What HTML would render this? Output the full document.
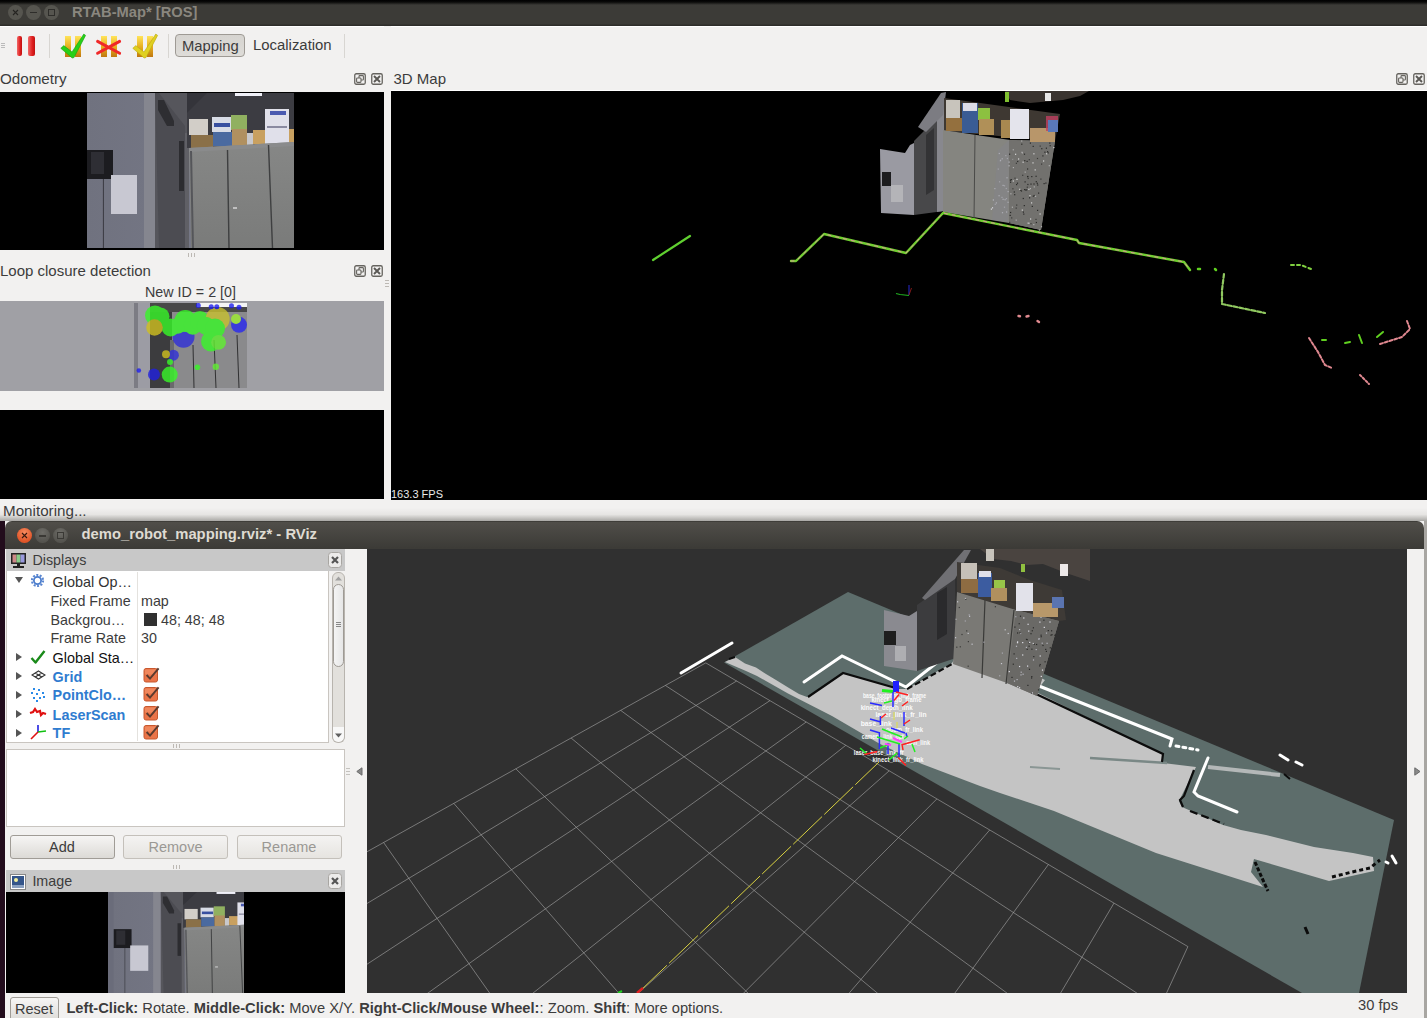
<!DOCTYPE html>
<html><head><meta charset="utf-8">
<style>
*{margin:0;padding:0;box-sizing:border-box}
html,body{width:1427px;height:1018px;overflow:hidden;background:#220c1c;font-family:"Liberation Sans",sans-serif;font-size:15px;color:#3c3c3c}
.a{position:absolute}
.t{position:absolute;white-space:nowrap;line-height:1}
.dk{position:absolute;width:11px;height:11px;border:1.5px solid #6a6864;border-radius:2px}
.cb{position:absolute;left:144px;width:14px;height:14px;border-radius:2px;background:linear-gradient(#f08a5e,#e06a3c);border:1px solid #c25a30}
.arr{position:absolute;left:16px;width:0;height:0;border-top:4px solid transparent;border-bottom:4px solid transparent;border-left:6px solid #555}
.btn{position:absolute;height:24px;border:1px solid #a09c96;border-radius:3px;background:linear-gradient(#f6f5f4,#dcdad6);text-align:center;line-height:22px;font-size:14.5px}
</style></head><body>
<!-- ============ RTAB-Map window ============ -->
<div class="a" style="left:0;top:0;width:1427px;height:26px;background:linear-gradient(#000 0,#0a0a09 2px,#3c3b37 5px,#3c3b37 24px,#2e2d2a 25px)"></div>
<div class="a" style="left:8px;top:5px;width:15px;height:15px;border-radius:50%;background:#56554f"></div>
<div class="a" style="left:26px;top:5px;width:15px;height:15px;border-radius:50%;background:#56554f"></div>
<div class="a" style="left:44px;top:5px;width:15px;height:15px;border-radius:50%;background:#56554f"></div>
<svg class="a" style="left:12px;top:9px" width="7" height="7"><path d="M1 1 L6 6 M6 1 L1 6" stroke="#262522" stroke-width="1.1"/></svg>
<div class="a" style="left:30px;top:12px;width:7px;height:1px;background:#2e2d2a"></div>
<div class="a" style="left:48px;top:9px;width:7px;height:7px;border:1.5px solid #2e2d2a"></div>
<div class="t" style="left:72px;top:4.6px;font-size:14.7px;font-weight:bold;color:#8a877f">RTAB-Map* [ROS]</div>
<div class="a" style="left:0;top:26px;width:1427px;height:495px;background:#f2f1f0;border-top:1px solid #fff"></div>
<!-- toolbar -->
<div class="a" style="left:1px;top:43px;width:4px;height:1px;background:#bbb;box-shadow:0 2px 0 #bbb,0 4px 0 #bbb"></div>
<div class="a" style="left:17px;top:36px;width:5px;height:20px;border-radius:2px;background:linear-gradient(90deg,#f06a6a,#e02020 60%,#c01010)"></div>
<div class="a" style="left:28px;top:36px;width:7px;height:20px;border-radius:2px;background:linear-gradient(90deg,#f06a6a,#e02020 60%,#c01010)"></div>
<div class="a" style="left:49px;top:34px;width:1px;height:24px;background:#d8d6d2"></div>
<div class="a" style="left:168px;top:34px;width:1px;height:24px;background:#d8d6d2"></div>
<div class="a" style="left:344px;top:34px;width:1px;height:24px;background:#d8d6d2"></div>
<svg class="a" style="left:58px;top:32px" width="104" height="28" viewBox="0 0 104 28">
 <defs><linearGradient id="gy" x1="0" y1="0" x2="0" y2="1"><stop offset="0" stop-color="#ffe45a"/><stop offset="0.5" stop-color="#e8b020"/><stop offset="1" stop-color="#c07810"/></linearGradient></defs>
 <rect x="7" y="4" width="6" height="21" fill="url(#gy)"/><rect x="17" y="4" width="6" height="21" fill="url(#gy)"/>
 <polygon points="2.8,16.3 5.8,13.6 14,20 25.8,2 27.6,3.4 16,25.5 14.2,26" fill="#28d018" stroke="#18a010" stroke-width="0.6"/>
 <rect x="43" y="4" width="6" height="21" fill="url(#gy)"/><rect x="53" y="4" width="6" height="21" fill="url(#gy)"/>
 <path d="M39.6 9.4 L61.6 21.2 M39.6 21.2 L61.6 9.4" stroke="#f02828" stroke-width="3" stroke-linecap="round"/>
 <rect x="79" y="4" width="6" height="21" fill="url(#gy)"/><rect x="89" y="4" width="6" height="21" fill="url(#gy)"/>
 <polygon points="74.8,16.3 77.8,13.6 86,20 97.8,2 99.6,3.4 88,25.5 86.2,26" fill="#e0d020" stroke="#b8a810" stroke-width="0.6"/>
</svg>
<div class="a" style="left:175px;top:34px;width:70px;height:23px;border:1px solid #9e9a94;border-radius:4px;background:linear-gradient(#d6d4d0,#dedcd8)"></div>
<div class="t" style="left:182px;top:38.6px;font-size:14.8px">Mapping</div>
<div class="t" style="left:253px;top:38.2px;font-size:14.9px">Localization</div>
<!-- docks -->
<div class="t" style="left:0;top:71.3px;font-size:15.2px">Odometry</div>
<svg class="a" style="left:354px;top:73px" width="12" height="12" viewBox="0 0 12 12"><rect x="0.75" y="0.75" width="10.5" height="10.5" rx="1.5" fill="none" stroke="#66645f" stroke-width="1.3"/><rect x="5" y="2.6" width="4.4" height="4.4" rx="0.8" fill="none" stroke="#66645f" stroke-width="1.1"/><rect x="2.6" y="5" width="4.4" height="4.4" rx="0.8" fill="#f2f1f0" stroke="#66645f" stroke-width="1.1"/></svg><svg class="a" style="left:371px;top:73px" width="12" height="12" viewBox="0 0 12 12"><rect x="0.75" y="0.75" width="10.5" height="10.5" rx="1.5" fill="none" stroke="#66645f" stroke-width="1.3"/><path d="M3 3 L9 9 M9 3 L3 9" stroke="#5a5854" stroke-width="1.9"/></svg>
<div class="a" style="left:0;top:92px;width:384px;height:158px;background:#000"></div>
<div class="a" style="left:188px;top:253px;width:1px;height:4px;background:#bdb9b4;box-shadow:3px 0 0 #bdb9b4,6px 0 0 #bdb9b4"></div>
<div class="t" style="left:0;top:263.2px;font-size:15px">Loop closure detection</div>
<svg class="a" style="left:354px;top:265px" width="12" height="12" viewBox="0 0 12 12"><rect x="0.75" y="0.75" width="10.5" height="10.5" rx="1.5" fill="none" stroke="#66645f" stroke-width="1.3"/><rect x="5" y="2.6" width="4.4" height="4.4" rx="0.8" fill="none" stroke="#66645f" stroke-width="1.1"/><rect x="2.6" y="5" width="4.4" height="4.4" rx="0.8" fill="#f2f1f0" stroke="#66645f" stroke-width="1.1"/></svg><svg class="a" style="left:371px;top:265px" width="12" height="12" viewBox="0 0 12 12"><rect x="0.75" y="0.75" width="10.5" height="10.5" rx="1.5" fill="none" stroke="#66645f" stroke-width="1.3"/><path d="M3 3 L9 9 M9 3 L3 9" stroke="#5a5854" stroke-width="1.9"/></svg>
<div class="t" style="left:145px;top:284.9px;font-size:14.3px">New ID = 2 [0]</div>
<div class="a" style="left:0;top:301px;width:385px;height:90px;background:#a0a0a5"></div>
<div class="a" style="left:0;top:410px;width:384px;height:89px;background:#000"></div>
<div class="a" style="left:384px;top:26px;width:7px;height:474px;background:#f2f1f0"></div>
<div class="a" style="left:385px;top:280px;width:4px;height:1px;background:#bdb9b4;box-shadow:0 3px 0 #bdb9b4,0 6px 0 #bdb9b4"></div>
<div class="t" style="left:393.5px;top:71.3px;font-size:15px">3D Map</div>
<svg class="a" style="left:1396px;top:73px" width="12" height="12" viewBox="0 0 12 12"><rect x="0.75" y="0.75" width="10.5" height="10.5" rx="1.5" fill="none" stroke="#66645f" stroke-width="1.3"/><rect x="5" y="2.6" width="4.4" height="4.4" rx="0.8" fill="none" stroke="#66645f" stroke-width="1.1"/><rect x="2.6" y="5" width="4.4" height="4.4" rx="0.8" fill="#f2f1f0" stroke="#66645f" stroke-width="1.1"/></svg><svg class="a" style="left:1413px;top:73px" width="12" height="12" viewBox="0 0 12 12"><rect x="0.75" y="0.75" width="10.5" height="10.5" rx="1.5" fill="none" stroke="#66645f" stroke-width="1.3"/><path d="M3 3 L9 9 M9 3 L3 9" stroke="#5a5854" stroke-width="1.9"/></svg>
<div class="a" style="left:391px;top:90px;width:1036px;height:1px;background:#fff"></div>
<!--MAP3D-->
<svg class="a" style="left:391px;top:91px" width="1036" height="409" viewBox="391 91 1036 409">
<rect x="391" y="91" width="1036" height="409" fill="#000"/>
<!-- point cloud corner -->
<polygon points="1005,91 1089,91 1080,96 1063,100 1030,103 1010,100" fill="#3a3430"/>
<polygon points="880,149 905,153 910,145 914,143 914,215 881,213" fill="#9a9aa2"/>
<rect x="882" y="172" width="9" height="14" fill="#1c1c1e"/>
<rect x="891" y="185" width="12" height="17" fill="#b4b4b8"/>
<polygon points="914,141 938,117 944,98 944,211 914,215" fill="#48484a"/>
<polygon points="926,135 934,128 934,190 926,195" fill="#333335"/>
<polygon points="937,100 944,97 944,211 937,212" fill="#88888e"/>
<polygon points="918,127 941,93 946,92 943,115 926,132" fill="#7c7c82"/>
<polygon points="944,98 1060,114 1055,141 944,131" fill="#3e3832"/>
<polygon points="943,130 1010,140 1055,141 1041,230 1009,223 943,212" fill="#858580"/>
<polygon points="1009,140 1055,141 1041,230 1009,223" fill="#72716e"/>
<path d="M975 135 L974 220" stroke="#4a4a48" stroke-width="1"/>
<g><rect x="1023.9" y="153.6" width="1.2" height="1.2" fill="#2a2a28"/><rect x="1012.3" y="188.2" width="1.2" height="1.2" fill="#3a3a38"/><rect x="1035.8" y="221.9" width="1.2" height="1.2" fill="#2a2a28"/><rect x="1010.7" y="179.0" width="1.2" height="1.2" fill="#2a2a28"/><rect x="1020.1" y="189.6" width="1.2" height="1.2" fill="#2a2a28"/><rect x="1047.0" y="151.1" width="1.2" height="1.2" fill="#2a2a28"/><rect x="1038.0" y="192.5" width="1.2" height="1.2" fill="#2a2a28"/><rect x="1035.5" y="175.7" width="1.2" height="1.2" fill="#2a2a28"/><rect x="1011.1" y="217.3" width="1.2" height="1.2" fill="#3a3a38"/><rect x="1028.3" y="188.7" width="1.2" height="1.2" fill="#d8d8d8"/><rect x="1023.2" y="213.5" width="1.2" height="1.2" fill="#2a2a28"/><rect x="1013.7" y="191.4" width="1.2" height="1.2" fill="#2a2a28"/><rect x="1026.1" y="189.3" width="1.2" height="1.2" fill="#2a2a28"/><rect x="1035.0" y="195.7" width="1.2" height="1.2" fill="#b0b0b0"/><rect x="1040.3" y="178.5" width="1.2" height="1.2" fill="#3a3a38"/><rect x="1030.4" y="223.1" width="1.2" height="1.2" fill="#3a3a38"/><rect x="1022.8" y="211.5" width="1.2" height="1.2" fill="#2a2a28"/><rect x="1012.8" y="167.0" width="1.2" height="1.2" fill="#b0b0b0"/><rect x="1014.4" y="177.6" width="1.2" height="1.2" fill="#3a3a38"/><rect x="1016.0" y="184.0" width="1.2" height="1.2" fill="#2a2a28"/><rect x="1053.3" y="147.0" width="1.2" height="1.2" fill="#d8d8d8"/><rect x="1035.4" y="218.8" width="1.2" height="1.2" fill="#3a3a38"/><rect x="1024.6" y="171.5" width="1.2" height="1.2" fill="#b0b0b0"/><rect x="1035.7" y="181.1" width="1.2" height="1.2" fill="#2a2a28"/><rect x="1039.6" y="145.5" width="1.2" height="1.2" fill="#3a3a38"/><rect x="1038.8" y="229.4" width="1.2" height="1.2" fill="#b0b0b0"/><rect x="1022.1" y="174.7" width="1.2" height="1.2" fill="#3a3a38"/><rect x="1010.0" y="181.6" width="1.2" height="1.2" fill="#2a2a28"/><rect x="1037.1" y="184.4" width="1.2" height="1.2" fill="#2a2a28"/><rect x="1044.3" y="151.6" width="1.2" height="1.2" fill="#2a2a28"/><rect x="1027.3" y="222.5" width="1.2" height="1.2" fill="#b0b0b0"/><rect x="1012.7" y="180.4" width="1.2" height="1.2" fill="#d8d8d8"/><rect x="1021.8" y="152.3" width="1.2" height="1.2" fill="#b0b0b0"/><rect x="1048.7" y="165.1" width="1.2" height="1.2" fill="#b0b0b0"/><rect x="1026.5" y="160.8" width="1.2" height="1.2" fill="#2a2a28"/><rect x="1017.1" y="160.9" width="1.2" height="1.2" fill="#2a2a28"/><rect x="1009.6" y="214.8" width="1.2" height="1.2" fill="#2a2a28"/><rect x="1021.1" y="140.4" width="1.2" height="1.2" fill="#b0b0b0"/><rect x="1033.6" y="194.9" width="1.2" height="1.2" fill="#3a3a38"/><rect x="1032.7" y="195.6" width="1.2" height="1.2" fill="#2a2a28"/><rect x="1030.0" y="218.4" width="1.2" height="1.2" fill="#d8d8d8"/><rect x="1027.0" y="175.9" width="1.2" height="1.2" fill="#2a2a28"/><rect x="1031.2" y="176.0" width="1.2" height="1.2" fill="#2a2a28"/><rect x="1012.1" y="158.8" width="1.2" height="1.2" fill="#2a2a28"/><rect x="1014.1" y="194.1" width="1.2" height="1.2" fill="#2a2a28"/><rect x="1009.0" y="153.6" width="1.2" height="1.2" fill="#2a2a28"/><rect x="1012.2" y="158.7" width="1.2" height="1.2" fill="#b0b0b0"/><rect x="1015.8" y="162.7" width="1.2" height="1.2" fill="#3a3a38"/><rect x="1036.7" y="182.7" width="1.2" height="1.2" fill="#2a2a28"/><rect x="1030.4" y="183.5" width="1.2" height="1.2" fill="#2a2a28"/><rect x="1015.6" y="207.5" width="1.2" height="1.2" fill="#3a3a38"/><rect x="1031.0" y="202.3" width="1.2" height="1.2" fill="#d8d8d8"/><rect x="1033.3" y="153.2" width="1.2" height="1.2" fill="#d8d8d8"/><rect x="1022.7" y="197.9" width="1.2" height="1.2" fill="#2a2a28"/><rect x="1041.0" y="163.5" width="1.2" height="1.2" fill="#3a3a38"/><rect x="1019.2" y="188.7" width="1.2" height="1.2" fill="#d8d8d8"/><rect x="1024.2" y="160.1" width="1.2" height="1.2" fill="#2a2a28"/><rect x="1043.0" y="160.4" width="1.2" height="1.2" fill="#d8d8d8"/><rect x="1031.7" y="205.8" width="1.2" height="1.2" fill="#2a2a28"/><rect x="1045.3" y="182.5" width="1.2" height="1.2" fill="#2a2a28"/><rect x="1040.9" y="226.1" width="1.2" height="1.2" fill="#b0b0b0"/><rect x="1012.7" y="149.2" width="1.2" height="1.2" fill="#b0b0b0"/><rect x="1018.0" y="158.4" width="1.2" height="1.2" fill="#d8d8d8"/><rect x="1009.1" y="221.8" width="1.2" height="1.2" fill="#3a3a38"/><rect x="1045.8" y="147.6" width="1.2" height="1.2" fill="#2a2a28"/><rect x="1043.5" y="183.0" width="1.2" height="1.2" fill="#2a2a28"/><rect x="1029.0" y="197.2" width="1.2" height="1.2" fill="#2a2a28"/><rect x="1027.2" y="176.1" width="1.2" height="1.2" fill="#2a2a28"/><rect x="1042.3" y="155.3" width="1.2" height="1.2" fill="#2a2a28"/><rect x="1010.3" y="193.2" width="1.2" height="1.2" fill="#b0b0b0"/><rect x="1046.1" y="153.2" width="1.2" height="1.2" fill="#d8d8d8"/><rect x="1025.1" y="189.4" width="1.2" height="1.2" fill="#2a2a28"/><rect x="1010.0" y="211.9" width="1.2" height="1.2" fill="#2a2a28"/><rect x="1033.2" y="224.0" width="1.2" height="1.2" fill="#b0b0b0"/><rect x="1049.2" y="142.5" width="1.2" height="1.2" fill="#2a2a28"/><rect x="1022.5" y="161.6" width="1.2" height="1.2" fill="#d8d8d8"/><rect x="1024.0" y="189.0" width="1.2" height="1.2" fill="#2a2a28"/><rect x="1011.8" y="206.6" width="1.2" height="1.2" fill="#b0b0b0"/><rect x="1039.5" y="213.4" width="1.2" height="1.2" fill="#d8d8d8"/><rect x="1028.3" y="222.6" width="1.2" height="1.2" fill="#d8d8d8"/><rect x="1015.0" y="153.7" width="1.2" height="1.2" fill="#d8d8d8"/><rect x="1009.9" y="179.6" width="1.2" height="1.2" fill="#2a2a28"/><rect x="1037.0" y="209.8" width="1.2" height="1.2" fill="#2a2a28"/><rect x="1016.9" y="182.6" width="1.2" height="1.2" fill="#2a2a28"/><rect x="1034.6" y="169.3" width="1.2" height="1.2" fill="#d8d8d8"/><rect x="1033.4" y="183.4" width="1.2" height="1.2" fill="#2a2a28"/><rect x="1049.6" y="145.1" width="1.2" height="1.2" fill="#2a2a28"/><rect x="1021.7" y="209.5" width="1.2" height="1.2" fill="#d8d8d8"/><rect x="1029.8" y="142.5" width="1.2" height="1.2" fill="#2a2a28"/><rect x="1029.4" y="195.1" width="1.2" height="1.2" fill="#d8d8d8"/><rect x="1036.9" y="157.9" width="1.2" height="1.2" fill="#3a3a38"/><rect x="1029.8" y="188.0" width="1.2" height="1.2" fill="#b0b0b0"/><rect x="1032.4" y="162.3" width="1.2" height="1.2" fill="#d8d8d8"/><rect x="1020.9" y="190.4" width="1.2" height="1.2" fill="#2a2a28"/><rect x="1047.6" y="152.3" width="1.2" height="1.2" fill="#2a2a28"/><rect x="1027.0" y="168.4" width="1.2" height="1.2" fill="#2a2a28"/><rect x="1028.7" y="159.1" width="1.2" height="1.2" fill="#3a3a38"/><rect x="1016.1" y="204.5" width="1.2" height="1.2" fill="#3a3a38"/><rect x="1015.6" y="219.5" width="1.2" height="1.2" fill="#b0b0b0"/><rect x="1027.3" y="183.9" width="1.2" height="1.2" fill="#2a2a28"/><rect x="1016.4" y="178.8" width="1.2" height="1.2" fill="#d8d8d8"/><rect x="1027.6" y="177.9" width="1.2" height="1.2" fill="#3a3a38"/><rect x="1023.7" y="205.0" width="1.2" height="1.2" fill="#2a2a28"/><rect x="1024.5" y="181.3" width="1.2" height="1.2" fill="#2a2a28"/><rect x="1026.7" y="186.6" width="1.2" height="1.2" fill="#3a3a38"/><rect x="1032.6" y="145.8" width="1.2" height="1.2" fill="#2a2a28"/><rect x="1021.2" y="143.6" width="1.2" height="1.2" fill="#2a2a28"/><rect x="1021.4" y="151.7" width="1.2" height="1.2" fill="#b0b0b0"/><rect x="1033.7" y="186.3" width="1.2" height="1.2" fill="#b0b0b0"/><rect x="1041.2" y="148.1" width="1.2" height="1.2" fill="#2a2a28"/><rect x="1005.2" y="155.0" width="1.2" height="1.2" fill="#c0c0c8"/><rect x="1001.6" y="158.2" width="1.2" height="1.2" fill="#d8d8e0"/><rect x="1006.4" y="177.2" width="1.2" height="1.2" fill="#d8d8e0"/><rect x="1007.4" y="191.0" width="1.2" height="1.2" fill="#c0c0c8"/><rect x="1000.0" y="159.6" width="1.2" height="1.2" fill="#c0c0c8"/><rect x="1008.4" y="161.5" width="1.2" height="1.2" fill="#c0c0c8"/><rect x="995.8" y="202.3" width="1.2" height="1.2" fill="#d8d8e0"/><rect x="998.5" y="195.1" width="1.2" height="1.2" fill="#d8d8e0"/><rect x="1003.9" y="185.2" width="1.2" height="1.2" fill="#c0c0c8"/><rect x="999.8" y="160.1" width="1.2" height="1.2" fill="#d8d8e0"/><rect x="992.0" y="207.2" width="1.2" height="1.2" fill="#d8d8e0"/><rect x="1002.5" y="184.8" width="1.2" height="1.2" fill="#d8d8e0"/><rect x="1008.4" y="165.2" width="1.2" height="1.2" fill="#c0c0c8"/><rect x="1005.8" y="198.0" width="1.2" height="1.2" fill="#c0c0c8"/><rect x="997.7" y="168.5" width="1.2" height="1.2" fill="#c0c0c8"/><rect x="1001.9" y="212.1" width="1.2" height="1.2" fill="#d8d8e0"/><rect x="1006.0" y="211.4" width="1.2" height="1.2" fill="#d8d8e0"/><rect x="1001.4" y="196.8" width="1.2" height="1.2" fill="#c0c0c8"/><rect x="998.7" y="152.9" width="1.2" height="1.2" fill="#d8d8e0"/><rect x="1006.8" y="157.9" width="1.2" height="1.2" fill="#c0c0c8"/><rect x="999.0" y="181.2" width="1.2" height="1.2" fill="#c0c0c8"/><rect x="994.7" y="203.7" width="1.2" height="1.2" fill="#c0c0c8"/><rect x="994.4" y="188.0" width="1.2" height="1.2" fill="#c0c0c8"/><rect x="1002.5" y="198.7" width="1.2" height="1.2" fill="#d8d8e0"/><rect x="1004.5" y="199.1" width="1.2" height="1.2" fill="#d8d8e0"/><rect x="992.8" y="199.4" width="1.2" height="1.2" fill="#c0c0c8"/><rect x="990.8" y="208.5" width="1.2" height="1.2" fill="#d8d8e0"/><rect x="1003.9" y="206.6" width="1.2" height="1.2" fill="#c0c0c8"/><rect x="1007.3" y="201.7" width="1.2" height="1.2" fill="#c0c0c8"/><rect x="1005.7" y="187.9" width="1.2" height="1.2" fill="#c0c0c8"/></g>
<polygon points="998,150 1009,140 1008,222 992,220" fill="#84848a" opacity="0.5"/>
<rect x="946" y="100" width="14" height="20" fill="#c8c4bc"/>
<rect x="946" y="118" width="17" height="13" fill="#94703e"/>
<rect x="962" y="103" width="16" height="30" fill="#3a5c94"/>
<rect x="963" y="103" width="14" height="8" fill="#dcdce6"/>
<rect x="978" y="108" width="12" height="12" fill="#8cc040"/>
<rect x="979" y="119" width="15" height="16" fill="#b09058"/>
<rect x="1001" y="120" width="12" height="18" fill="#a88850"/>
<rect x="1010" y="109" width="19" height="30" fill="#e4e4ec"/>
<rect x="1030" y="128" width="25" height="14" fill="#b8966a"/>
<rect x="1046" y="116" width="12" height="15" fill="#c04060" opacity="0.8"/>
<rect x="1048" y="120" width="10" height="12" fill="#5a78b8"/>
<rect x="1005" y="92" width="4" height="10" fill="#80c030"/>
<rect x="1045" y="93" width="6" height="8" fill="#e8e8e8"/>
<!-- laser scans -->
<g fill="none" stroke-linecap="round" stroke-linejoin="round">
<path d="M653 260 L690 236" stroke="#60d030" stroke-width="2.2"/>
<path d="M791 261 L796 261 L824 234 L906 253 L943 213 L1077 240 L1079 243 L1184 262 L1190 270" stroke="#70d030" stroke-width="2.4"/>
<path d="M791 261 L796 261 L824 234 L906 253 L943 213 L1077 240 L1079 243 L1184 262 L1190 270" stroke="#e890a0" stroke-width="0.9" stroke-dasharray="3 5"/>
<path d="M1224 274 L1222 290 L1222 304 L1265 313" stroke="#90c860" stroke-width="2.2" stroke-dasharray="4 2"/>
<path d="M1291 265 L1301 265 L1311 269" stroke="#80d040" stroke-width="2" stroke-dasharray="3 3"/>
<path d="M1309 338 L1318 352 L1325 365 L1332 368" stroke="#e08890" stroke-width="2" stroke-dasharray="3 2"/>
<path d="M1360 375 L1369 384" stroke="#e08890" stroke-width="2" stroke-dasharray="2 2"/>
<path d="M1380 344 L1402 337 L1410 329 L1407 321" stroke="#e08890" stroke-width="2" stroke-dasharray="3 2"/>
<path d="M1359 335 L1362 343 M1377 337 L1383 332 M1322 340 L1326 340 M1345 343 L1350 342" stroke="#60d020" stroke-width="2"/>
<path d="M1198 269 L1200 269 M1215 269 L1216 270" stroke="#60d020" stroke-width="2.5"/>
<path d="M1018.5 316 L1020 316.3 M1026.5 316.5 L1028.5 316 M1037.5 321 L1039 322" stroke="#e08a90" stroke-width="2.4"/>
</g>
<path d="M896 293.5 L900 294.5 L909 295.5" stroke="#20b020" stroke-width="1.1" fill="none"/><path d="M909 285 L909 295" stroke="#2020a0" stroke-width="1.3"/><path d="M909 295 L911.5 288" stroke="#a02020" stroke-width="0.8"/>
<text x="391" y="498" font-family="Liberation Sans" font-size="11" fill="#e8e8e8">163.3 FPS</text>
</svg>
<!--/MAP3D-->
<div class="a" style="left:0;top:508px;width:1427px;height:13px;background:linear-gradient(#f2f1f0,#e6e5e3 50%,#a9a8a5)"></div>
<div class="t" style="left:3px;top:502.8px;font-size:15.2px">Monitoring...</div>
<!-- ============ RViz window ============ -->
<div class="a" style="left:5px;top:521px;width:1419px;height:497px;background:#f2f1f0"></div>
<div class="a" style="left:1424px;top:521px;width:3px;height:497px;background:#a8a6a2"></div>
<div class="a" style="left:5px;top:521px;width:1419px;height:28px;background:linear-gradient(#2e2d29 0,#504e49 1px,#3c3b37 27px);border-radius:7px 7px 0 0"></div>
<div class="a" style="left:17px;top:528px;width:15px;height:15px;border-radius:50%;background:radial-gradient(circle at 50% 30%,#f88a5e,#e05528 70%)"></div>
<div class="a" style="left:35px;top:528px;width:15px;height:15px;border-radius:50%;background:radial-gradient(circle at 50% 30%,#6e6d68,#55544f 70%)"></div>
<div class="a" style="left:53px;top:528px;width:15px;height:15px;border-radius:50%;background:radial-gradient(circle at 50% 30%,#6e6d68,#55544f 70%)"></div>
<svg class="a" style="left:21px;top:532px" width="7" height="7"><path d="M1 1 L6 6 M6 1 L1 6" stroke="#3a1a10" stroke-width="1.1"/></svg>
<div class="a" style="left:39px;top:535px;width:7px;height:1.5px;background:#3a3935"></div>
<div class="a" style="left:57px;top:532px;width:7px;height:7px;border:1.5px solid #3a3935"></div>
<div class="t" style="left:81.5px;top:527px;font-size:14.8px;font-weight:bold;color:#dfdbd2">demo_robot_mapping.rviz* - RViz</div>
<!-- displays panel -->
<div class="a" style="left:6px;top:549px;width:339px;height:22px;background:#c8c8c8"></div>
<svg class="a" style="left:10px;top:552px" width="17" height="17" viewBox="0 0 17 17"><rect x="1" y="1" width="15" height="11" fill="#222"/><rect x="2.5" y="2.5" width="4" height="8" fill="#c88"/><rect x="6.5" y="2.5" width="4" height="8" fill="#8c8"/><rect x="10.5" y="2.5" width="4" height="8" fill="#99d"/><rect x="7" y="12" width="3" height="2" fill="#222"/><rect x="3" y="14" width="11" height="2" fill="#222"/></svg>
<div class="t" style="left:32.4px;top:553px;font-size:14.3px">Displays</div>
<svg class="a" style="left:328px;top:552px" width="14" height="16" viewBox="0 0 14 16"><rect x="0.5" y="0.5" width="13" height="15" rx="3" fill="#ecebea" stroke="#a8a6a2"/><path d="M4 5 L10 11 M10 5 L4 11" stroke="#555" stroke-width="2.2"/></svg>
<div class="a" style="left:6px;top:571px;width:323px;height:172px;background:#fff;border-left:1px solid #c9c5c0;border-bottom:1px solid #c9c5c0;border-right:1px solid #c9c5c0"></div>
<div class="a" style="left:137px;top:572px;width:1px;height:169px;background:#e4e2de"></div>
<div class="a" style="left:332px;top:572px;width:13px;height:170px;border:1px solid #b8b4ae;border-radius:6px;background:#e2e0dc"></div>
<div class="a" style="left:333px;top:584px;width:11px;height:83px;border:1px solid #9e9a94;border-radius:6px;background:linear-gradient(90deg,#f4f4f4,#e6e6e6)"></div>
<div class="a" style="left:332px;top:727px;width:13px;height:16px;border:1px solid #b8b4ae;border-top:none;border-radius:0 0 6px 6px;background:#f8f8f8"></div><svg class="a" style="left:334px;top:733px" width="9" height="5"><path d="M1 0.5 L8 0.5 L4.5 4.5Z" fill="#606060"/></svg><svg class="a" style="left:334px;top:576px" width="9" height="5"><path d="M1 4.5 L8 4.5 L4.5 0.5Z" fill="#a0a0a0"/></svg><div class="a" style="left:336px;top:622px;width:5px;height:1px;background:#888;box-shadow:0 2px 0 #888,0 4px 0 #888"></div>
<div class="arr" style="left:15px;top:577px;border-left:4px solid transparent;border-right:4px solid transparent;border-top:6px solid #555;border-bottom:0"></div>
<svg class="a" style="left:30px;top:573px" width="15" height="15" viewBox="0 0 15 15"><circle cx="7.5" cy="7.5" r="5.6" fill="none" stroke="#5a86d0" stroke-width="2" stroke-dasharray="2 1.5"/><circle cx="7.5" cy="7.5" r="3.6" fill="none" stroke="#4a7ccc" stroke-width="1.8"/></svg>
<div class="t" style="left:52.6px;top:574.8px;font-size:14.4px;color:#333">Global Op…</div>
<div class="t" style="left:50.4px;top:593.5px;font-size:14.3px;color:#3c3c3c">Fixed Frame</div>
<div class="t" style="left:141px;top:593.5px;font-size:14.3px">map</div>
<div class="t" style="left:50.4px;top:612.8px;font-size:14.3px">Backgrou…</div>
<div class="a" style="left:144px;top:613px;width:13px;height:13px;background:#303030"></div>
<div class="t" style="left:161px;top:612.8px;font-size:14.3px">48; 48; 48</div>
<div class="t" style="left:50.4px;top:631.3px;font-size:14.3px">Frame Rate</div>
<div class="t" style="left:141px;top:631.3px;font-size:14.3px">30</div>
<div class="arr" style="top:653px"></div>
<svg class="a" style="left:30px;top:650px" width="16" height="14" viewBox="0 0 16 14"><path d="M1.5 8 L5.5 12.5 L14.5 1" fill="none" stroke="#1a8a1a" stroke-width="2.4" stroke-linejoin="round"/></svg>
<div class="t" style="left:52.6px;top:650.5px;font-size:14.4px;color:#111">Global Sta…</div>
<div class="arr" style="top:672px"></div>
<svg class="a" style="left:31px;top:670px" width="15" height="10" viewBox="0 0 15 10"><path d="M7.5 1 L14 5 L7.5 9 L1 5 Z M4.2 3 L10.8 7 M10.8 3 L4.2 7" fill="none" stroke="#333" stroke-width="1.1"/></svg>
<div class="t" style="left:52.6px;top:669.5px;font-size:14.4px;font-weight:bold;color:#2f7cd0">Grid</div>
<svg class="a" style="left:143px;top:667px" width="17" height="16" viewBox="0 0 17 16"><rect x="1" y="1.5" width="13.5" height="13.5" rx="2" fill="#ea7448" stroke="#c8582e" stroke-width="1"/><rect x="2" y="2.5" width="11.5" height="5" rx="1" fill="#f4946a" opacity="0.6"/><path d="M3.6 8 L7 11.6 L15.6 1.4" fill="none" stroke="#5a3a2e" stroke-width="2"/></svg>
<div class="arr" style="top:691px"></div>
<svg class="a" style="left:30px;top:687px" width="16" height="15" viewBox="0 0 16 15"><g fill="#2a8ae8"><rect x="3" y="1" width="2" height="2"/><rect x="8" y="2" width="2" height="2"/><rect x="1" y="5" width="2" height="2"/><rect x="6" y="6" width="2" height="2"/><rect x="12" y="5" width="2" height="2"/><rect x="3" y="10" width="2" height="2"/><rect x="9" y="10" width="2" height="2"/><rect x="6" y="13" width="2" height="2"/><rect x="13" y="9" width="2" height="2"/></g></svg>
<div class="t" style="left:52.6px;top:688.4px;font-size:14.4px;font-weight:bold;color:#2f7cd0">PointClo…</div>
<svg class="a" style="left:143px;top:686px" width="17" height="16" viewBox="0 0 17 16"><rect x="1" y="1.5" width="13.5" height="13.5" rx="2" fill="#ea7448" stroke="#c8582e" stroke-width="1"/><rect x="2" y="2.5" width="11.5" height="5" rx="1" fill="#f4946a" opacity="0.6"/><path d="M3.6 8 L7 11.6 L15.6 1.4" fill="none" stroke="#5a3a2e" stroke-width="2"/></svg>
<div class="arr" style="top:710px"></div>
<svg class="a" style="left:29px;top:707px" width="18" height="12" viewBox="0 0 18 12"><path d="M1 6 L4 5 L6 2 L8 5 L11 4 L12 8 L14 6 L17 7" fill="none" stroke="#e01010" stroke-width="2.2"/></svg>
<div class="t" style="left:52.6px;top:707.5px;font-size:14.4px;font-weight:bold;color:#2f7cd0">LaserScan</div>
<svg class="a" style="left:143px;top:705px" width="17" height="16" viewBox="0 0 17 16"><rect x="1" y="1.5" width="13.5" height="13.5" rx="2" fill="#ea7448" stroke="#c8582e" stroke-width="1"/><rect x="2" y="2.5" width="11.5" height="5" rx="1" fill="#f4946a" opacity="0.6"/><path d="M3.6 8 L7 11.6 L15.6 1.4" fill="none" stroke="#5a3a2e" stroke-width="2"/></svg>
<div class="arr" style="top:729px"></div>
<svg class="a" style="left:29px;top:724px" width="18" height="16" viewBox="0 0 18 16"><path d="M9 8 L9 1" stroke="#2020e0" stroke-width="1.6"/><path d="M9 8 L17 7" stroke="#10c010" stroke-width="1.6"/><path d="M9 8 L2 15" stroke="#e01010" stroke-width="1.6"/></svg>
<div class="t" style="left:52.6px;top:726.4px;font-size:14.4px;font-weight:bold;color:#2f7cd0">TF</div>
<svg class="a" style="left:143px;top:724px" width="17" height="16" viewBox="0 0 17 16"><rect x="1" y="1.5" width="13.5" height="13.5" rx="2" fill="#ea7448" stroke="#c8582e" stroke-width="1"/><rect x="2" y="2.5" width="11.5" height="5" rx="1" fill="#f4946a" opacity="0.6"/><path d="M3.6 8 L7 11.6 L15.6 1.4" fill="none" stroke="#5a3a2e" stroke-width="2"/></svg>
<div class="a" style="left:173px;top:744px;width:1px;height:4px;background:#bdb9b4;box-shadow:3px 0 0 #bdb9b4,6px 0 0 #bdb9b4"></div>
<div class="a" style="left:6px;top:749px;width:339px;height:78px;background:#fff;border:1px solid #c9c5c0"></div>
<div class="btn" style="left:9.5px;top:834.5px;width:105px;color:#3c3c3c">Add</div>
<div class="btn" style="left:123px;top:834.5px;width:105px;color:#9a9894;border-color:#c4c0ba;background:linear-gradient(#f4f3f2,#e6e4e0)">Remove</div>
<div class="btn" style="left:236.5px;top:834.5px;width:105px;color:#9a9894;border-color:#c4c0ba;background:linear-gradient(#f4f3f2,#e6e4e0)">Rename</div>
<div class="a" style="left:173px;top:865px;width:1px;height:4px;background:#bdb9b4;box-shadow:3px 0 0 #bdb9b4,6px 0 0 #bdb9b4"></div>
<div class="a" style="left:6px;top:870px;width:339px;height:22px;background:#c8c8c8"></div>
<svg class="a" style="left:10px;top:874px" width="16" height="16" viewBox="0 0 16 16"><rect x="0.5" y="0.5" width="15" height="15" fill="#fff" stroke="#888"/><rect x="2" y="2" width="12" height="12" fill="#34558a"/><circle cx="6" cy="6" r="2" fill="#f4f0a0"/><path d="M2 11 L14 11 L14 14 L2 14Z" fill="#8aa0c0"/></svg>
<div class="t" style="left:32.4px;top:874px;font-size:14.3px">Image</div>
<svg class="a" style="left:328px;top:873px" width="14" height="16" viewBox="0 0 14 16"><rect x="0.5" y="0.5" width="13" height="15" rx="3" fill="#ecebea" stroke="#a8a6a2"/><path d="M4 5 L10 11 M10 5 L4 11" stroke="#555" stroke-width="2.2"/></svg>
<div class="a" style="left:6px;top:892px;width:339px;height:101px;background:#000"></div>
<!-- render view -->
<!--RVIZ-->
<svg class="a" style="left:367px;top:549px" width="1040" height="444" viewBox="367 549 1040 444">
<rect x="367" y="549" width="1040" height="444" fill="#303030"/>
<path d="M-20.7 1067.9L85.3 3346.9M104.9 997.8L438.0 2579.2M211.8 938.3L652.2 2112.9M303.7 887.0L796.1 1799.6M383.6 842.5L899.4 1574.7M453.8 803.4L977.2 1405.3M515.8 768.8L1037.9 1273.2M571.1 738.0L1086.5 1167.3M620.7 710.4L1126.4 1080.5M665.3 685.4L1159.7 1008.0M705.8 662.9L1187.9 946.6M-20.7 1067.9L705.8 662.9M-17.6 1135.0L736.6 681.0M-14.0 1213.5L770.0 700.6M-9.6 1306.6L806.2 722.0M-4.4 1418.8L845.8 745.3M2.0 1556.7L889.2 770.8M10.1 1730.1L936.9 798.9M20.5 1954.8L989.7 830.0M34.6 2257.6L1048.4 864.5M54.7 2687.7L1114.0 903.1M85.3 3346.9L1187.9 946.6" stroke="#a4a4a4" stroke-opacity="0.62" stroke-width="1" fill="none"/>
<path d="M638 993 L 879 762" stroke="#d8d040" stroke-width="1" stroke-dasharray="40 3"/>
<path d="M637 993 L 643 988" stroke="#e02020" stroke-width="2.5"/>
<path d="M618 993 L 622 991" stroke="#20d020" stroke-width="2"/>
<!-- map -->
<polygon points="724,662.5 848,592 1394,820 1359,993 1302,993" fill="#5d6d6b"/>
<polygon points="727,661 735,657 745,663.5 756,667.5 766,674 776,680 789,688 799,694 807,697 843,673 899,689 907,689 952,663 965,640 1045,680 1036,692 1120,734 1163,754 1163,763 1196,767 1179,801 1182,807 1223,825 1241,830 1266,835 1314,847 1353,853 1373,857 1374,871 1329,881 1254,859 1251,872 1263,887 1156,853 1054,811 1000,793 980,786 922,764 880,744 832,716 788,693.5 757,676 746,671 725,662" fill="#c4c4c4"/>
<path d="M1090 758 L1167 763" stroke="#7a8886" stroke-width="2.5"/>
<path d="M1030 767 L1060 769" stroke="#8a9694" stroke-width="2"/>
<path d="M1208 767 L1280 775" stroke="#b4b8b8" stroke-width="4"/>
<g stroke="#0c0c0c" stroke-width="2.2" fill="none">
<path d="M808 697 L843 673 L899 689"/><path d="M729 659 L735 657" stroke-width="2"/>
<path d="M907 689 L952 664" stroke-dasharray="6 3"/>
<path d="M1036 694 L1163 754 L1162 762"/>
<path d="M1194 770 L1184 796 L1180 800 L1183 807"/>
<path d="M1190 811 L1224 824" stroke-dasharray="8 4"/>
<path d="M1255 862 L1262 878 L1268 891" stroke-width="3" stroke-dasharray="4 2"/>
<path d="M1332 877 L1352 872 L1370 868 L1380 860" stroke-width="3" stroke-dasharray="4 3"/>
<path d="M1305 927 L1308 934" stroke-width="3"/>
<path d="M1284 774 L1290 779" stroke-width="2"/>
</g>
<g stroke="#fff" stroke-width="3" fill="none" stroke-linecap="round">
<path d="M681 673 L732 643"/>
<path d="M804 682 L842 656 L906 687 L953 650"/>
<path d="M1039 686 L1172 739 L1170 746"/>
<path d="M1176 746 L1198 750" stroke-dasharray="3 4"/>
<path d="M1208 758 L1194 792 L1198 796 L1237 812"/>
<path d="M1280 755 L1288 760 M1296 762 L1302 765"/>
<path d="M1392 856 L1396 863 M1386 862 L1388 863"/>
</g>
<!-- point cloud -->
<polygon points="964,549 1090,549 1090,581 1066,573 1043,564 1027,565 1011,561 993,559 980,549" fill="#4a4440"/>
<polygon points="884,610 909,616 917,611 917,671 884,666" fill="#8a8a90"/>
<rect x="884" y="631" width="12" height="14" fill="#1e1e1e"/>
<rect x="895" y="646" width="11" height="15" fill="#aeaeb2"/>
<polygon points="917,605 955,578 956,658 917,671" fill="#3c3c3e"/>
<polygon points="937,593 947,587 947,634 937,640" fill="#2a2a2c"/>
<polygon points="922,598 964,550 971,550 955,579 925,600" fill="#707074"/>
<polygon points="957,562 1000,568 1030,580 1062,590 1066,620 1059,621 1016,610 957,592" fill="#3e3a36"/>
<polygon points="957,592 1016,610 1059,621 1037,696 1007,683 953,664" fill="#7a7975"/>
<polygon points="1016,610 1059,621 1037,696 1007,683" fill="#6a6966"/>
<path d="M985 600 L982 678 M1014 610 L1006 684" stroke="#3a3a38" stroke-width="1.2"/>
<g><rect x="1026.6" y="648.8" width="1.2" height="1.2" fill="#2a2a28"/><rect x="1039.6" y="663.9" width="1.2" height="1.2" fill="#2a2a28"/><rect x="1033.2" y="656.0" width="1.2" height="1.2" fill="#2a2a28"/><rect x="1045.8" y="650.8" width="1.2" height="1.2" fill="#2a2a28"/><rect x="1051.0" y="630.2" width="1.2" height="1.2" fill="#2a2a28"/><rect x="1019.0" y="665.9" width="1.2" height="1.2" fill="#e0e0e8"/><rect x="1032.7" y="642.9" width="1.2" height="1.2" fill="#e0e0e8"/><rect x="1054.3" y="634.7" width="1.2" height="1.2" fill="#2a2a28"/><rect x="1039.1" y="665.3" width="1.2" height="1.2" fill="#2a2a28"/><rect x="1038.2" y="638.5" width="1.2" height="1.2" fill="#b8b8c0"/><rect x="1039.3" y="621.5" width="1.2" height="1.2" fill="#e0e0e8"/><rect x="1041.9" y="669.5" width="1.2" height="1.2" fill="#e0e0e8"/><rect x="1022.1" y="654.4" width="1.2" height="1.2" fill="#e0e0e8"/><rect x="1031.2" y="676.0" width="1.2" height="1.2" fill="#2a2a28"/><rect x="1023.2" y="617.4" width="1.2" height="1.2" fill="#e0e0e8"/><rect x="1030.4" y="633.1" width="1.2" height="1.2" fill="#2a2a28"/><rect x="1045.9" y="632.5" width="1.2" height="1.2" fill="#b8b8c0"/><rect x="1013.9" y="680.5" width="1.2" height="1.2" fill="#b8b8c0"/><rect x="1019.0" y="687.2" width="1.2" height="1.2" fill="#e0e0e8"/><rect x="1027.5" y="623.7" width="1.2" height="1.2" fill="#e0e0e8"/><rect x="1042.4" y="644.9" width="1.2" height="1.2" fill="#2a2a28"/><rect x="1028.6" y="642.3" width="1.2" height="1.2" fill="#2a2a28"/><rect x="1022.1" y="642.0" width="1.2" height="1.2" fill="#e0e0e8"/><rect x="1027.3" y="684.8" width="1.2" height="1.2" fill="#2a2a28"/><rect x="1025.8" y="646.8" width="1.2" height="1.2" fill="#b8b8c0"/><rect x="1051.4" y="634.1" width="1.2" height="1.2" fill="#2a2a28"/><rect x="1050.4" y="634.6" width="1.2" height="1.2" fill="#2a2a28"/><rect x="1020.0" y="632.9" width="1.2" height="1.2" fill="#b8b8c0"/><rect x="1016.9" y="642.1" width="1.2" height="1.2" fill="#e0e0e8"/><rect x="1045.1" y="648.8" width="1.2" height="1.2" fill="#2a2a28"/><rect x="1040.5" y="634.6" width="1.2" height="1.2" fill="#2a2a28"/><rect x="1015.9" y="645.7" width="1.2" height="1.2" fill="#b8b8c0"/><rect x="1022.5" y="673.6" width="1.2" height="1.2" fill="#b8b8c0"/><rect x="1028.1" y="630.5" width="1.2" height="1.2" fill="#e0e0e8"/><rect x="1036.0" y="643.9" width="1.2" height="1.2" fill="#2a2a28"/><rect x="1040.4" y="616.5" width="1.2" height="1.2" fill="#e0e0e8"/><rect x="1035.6" y="649.0" width="1.2" height="1.2" fill="#b8b8c0"/><rect x="1014.3" y="626.5" width="1.2" height="1.2" fill="#2a2a28"/><rect x="1016.1" y="657.8" width="1.2" height="1.2" fill="#b8b8c0"/><rect x="1019.4" y="632.2" width="1.2" height="1.2" fill="#2a2a28"/><rect x="1028.5" y="645.6" width="1.2" height="1.2" fill="#2a2a28"/><rect x="1026.6" y="639.1" width="1.2" height="1.2" fill="#2a2a28"/><rect x="1032.9" y="659.4" width="1.2" height="1.2" fill="#b8b8c0"/><rect x="1013.5" y="653.3" width="1.2" height="1.2" fill="#2a2a28"/><rect x="1027.0" y="665.5" width="1.2" height="1.2" fill="#e0e0e8"/><rect x="1008.7" y="671.0" width="1.2" height="1.2" fill="#e0e0e8"/><rect x="1031.3" y="648.6" width="1.2" height="1.2" fill="#2a2a28"/><rect x="1018.6" y="623.1" width="1.2" height="1.2" fill="#2a2a28"/><rect x="1040.7" y="675.8" width="1.2" height="1.2" fill="#e0e0e8"/><rect x="1011.4" y="676.8" width="1.2" height="1.2" fill="#2a2a28"/><rect x="1047.7" y="630.0" width="1.2" height="1.2" fill="#2a2a28"/><rect x="1040.6" y="636.1" width="1.2" height="1.2" fill="#2a2a28"/><rect x="1039.6" y="655.4" width="1.2" height="1.2" fill="#e0e0e8"/><rect x="1043.3" y="619.6" width="1.2" height="1.2" fill="#2a2a28"/><rect x="1017.0" y="632.4" width="1.2" height="1.2" fill="#2a2a28"/><rect x="1031.0" y="692.5" width="1.2" height="1.2" fill="#2a2a28"/><rect x="1031.7" y="630.2" width="1.2" height="1.2" fill="#2a2a28"/><rect x="1017.1" y="686.1" width="1.2" height="1.2" fill="#e0e0e8"/><rect x="1029.1" y="641.8" width="1.2" height="1.2" fill="#e0e0e8"/><rect x="1028.9" y="668.7" width="1.2" height="1.2" fill="#2a2a28"/><rect x="1032.8" y="627.2" width="1.2" height="1.2" fill="#2a2a28"/><rect x="1019.0" y="629.0" width="1.2" height="1.2" fill="#b8b8c0"/><rect x="1012.7" y="663.6" width="1.2" height="1.2" fill="#2a2a28"/><rect x="1037.9" y="689.3" width="1.2" height="1.2" fill="#2a2a28"/><rect x="1041.6" y="642.6" width="1.2" height="1.2" fill="#b8b8c0"/><rect x="1046.5" y="642.7" width="1.2" height="1.2" fill="#b8b8c0"/><rect x="1049.7" y="647.2" width="1.2" height="1.2" fill="#2a2a28"/><rect x="1043.7" y="626.8" width="1.2" height="1.2" fill="#e0e0e8"/><rect x="1017.0" y="641.3" width="1.2" height="1.2" fill="#e0e0e8"/><rect x="1020.4" y="674.3" width="1.2" height="1.2" fill="#b8b8c0"/><rect x="1025.9" y="638.8" width="1.2" height="1.2" fill="#2a2a28"/><rect x="1020.6" y="671.6" width="1.2" height="1.2" fill="#b8b8c0"/><rect x="1044.5" y="661.2" width="1.2" height="1.2" fill="#2a2a28"/><rect x="1031.7" y="692.3" width="1.2" height="1.2" fill="#e0e0e8"/><rect x="1049.4" y="621.4" width="1.2" height="1.2" fill="#e0e0e8"/><rect x="1016.5" y="679.0" width="1.2" height="1.2" fill="#b8b8c0"/><rect x="1038.6" y="638.2" width="1.2" height="1.2" fill="#b8b8c0"/><rect x="1031.0" y="677.4" width="1.2" height="1.2" fill="#2a2a28"/><rect x="1033.6" y="643.7" width="1.2" height="1.2" fill="#2a2a28"/><rect x="1019.9" y="615.6" width="1.2" height="1.2" fill="#2a2a28"/><rect x="983.3" y="641.6" width="1.2" height="1.2" fill="#a8a8b0"/><rect x="1015.2" y="616.1" width="1.2" height="1.2" fill="#a8a8b0"/><rect x="966.1" y="630.3" width="1.2" height="1.2" fill="#3a3a38"/><rect x="961.4" y="633.9" width="1.2" height="1.2" fill="#3a3a38"/><rect x="967.8" y="641.0" width="1.2" height="1.2" fill="#3a3a38"/><rect x="1000.9" y="663.0" width="1.2" height="1.2" fill="#c8c8d0"/><rect x="971.5" y="643.6" width="1.2" height="1.2" fill="#c8c8d0"/><rect x="969.0" y="615.7" width="1.2" height="1.2" fill="#c8c8d0"/><rect x="968.6" y="614.3" width="1.2" height="1.2" fill="#a8a8b0"/><rect x="964.9" y="597.9" width="1.2" height="1.2" fill="#c8c8d0"/><rect x="967.6" y="665.6" width="1.2" height="1.2" fill="#3a3a38"/><rect x="967.6" y="632.8" width="1.2" height="1.2" fill="#c8c8d0"/><rect x="955.5" y="618.7" width="1.2" height="1.2" fill="#a8a8b0"/><rect x="956.2" y="646.6" width="1.2" height="1.2" fill="#3a3a38"/><rect x="965.2" y="598.8" width="1.2" height="1.2" fill="#3a3a38"/><rect x="1007.6" y="632.9" width="1.2" height="1.2" fill="#c8c8d0"/><rect x="1001.8" y="652.5" width="1.2" height="1.2" fill="#a8a8b0"/><rect x="959.7" y="646.2" width="1.2" height="1.2" fill="#3a3a38"/><rect x="999.1" y="675.2" width="1.2" height="1.2" fill="#a8a8b0"/><rect x="1004.6" y="629.2" width="1.2" height="1.2" fill="#c8c8d0"/><rect x="964.7" y="620.4" width="1.2" height="1.2" fill="#a8a8b0"/><rect x="955.0" y="637.1" width="1.2" height="1.2" fill="#c8c8d0"/><rect x="957.0" y="601.2" width="1.2" height="1.2" fill="#c8c8d0"/><rect x="994.8" y="606.1" width="1.2" height="1.2" fill="#3a3a38"/><rect x="958.7" y="606.9" width="1.2" height="1.2" fill="#3a3a38"/></g>
<rect x="961" y="563" width="16" height="17" fill="#c6c0b8"/>
<rect x="961" y="579" width="17" height="14" fill="#8e6c42"/>
<rect x="978" y="573" width="14" height="24" fill="#3c5ca0"/>
<rect x="979" y="571" width="12" height="6" fill="#e0e0ea"/>
<rect x="994" y="580" width="11" height="11" fill="#98c448"/>
<rect x="991" y="588" width="16" height="13" fill="#b0905e"/>
<rect x="1016" y="583" width="17" height="28" fill="#e2e2ea"/>
<rect x="1033" y="603" width="25" height="14" fill="#b8986a"/>
<rect x="1052" y="597" width="12" height="11" fill="#5a74b0"/>
<rect x="986" y="549" width="8" height="12" fill="#c8c4bc"/>
<rect x="1060" y="564" width="8" height="12" fill="#ece8e8"/>
<rect x="1021" y="564" width="4" height="8" fill="#90c040"/>
<!-- TF cluster -->
<g font-family="Liberation Sans" font-weight="bold" fill="#ffffff" opacity="0.95"><text x="863" y="697.5" textLength="63" lengthAdjust="spacingAndGlyphs" font-size="6.5">base_footprint_link_frame</text><text x="871.5" y="701.8" textLength="50" lengthAdjust="spacingAndGlyphs" font-size="6.5">kinect_rgb_frame</text><text x="860.7" y="710" textLength="52" lengthAdjust="spacingAndGlyphs" font-size="6.5">kinect_depth_link</text><text x="875.5" y="716.6" textLength="51" lengthAdjust="spacingAndGlyphs" font-size="6.5">laser_link_fr_lin</text><text x="860.7" y="726.2" textLength="31" lengthAdjust="spacingAndGlyphs" font-size="6.5">base_link</text><text x="886" y="731.5" textLength="37" lengthAdjust="spacingAndGlyphs" font-size="6.5">odom_fr_link</text><text x="861.7" y="739" textLength="42" lengthAdjust="spacingAndGlyphs" font-size="6.5">camera_link_opt</text><text x="906" y="745" textLength="24" lengthAdjust="spacingAndGlyphs" font-size="6.5">cam_link</text><text x="853.8" y="755" textLength="50" lengthAdjust="spacingAndGlyphs" font-size="6.5">laser_base_link_fr</text><text x="872.5" y="761.5" textLength="51" lengthAdjust="spacingAndGlyphs" font-size="6.5">kinect_link_fr_link</text></g>
<g fill="none">
<path d="M896 681 L896 692" stroke="#2020ff" stroke-width="6"/>
<path d="M882 690.5 L893 691.5" stroke="#20f020" stroke-width="3"/>
<path d="M896 692 L908 695" stroke="#ff2020" stroke-width="1.6"/>
<g stroke-width="1.5">
<path d="M893 692 L893 707 M870 703 L882 705.5 M870 719 L880 721.7 M870 730 L880 733 M904 712 L904 726 M880.4 716 L880.4 725 M879.4 732 L879.4 749 M899 743 L899 757 M888 743 L888 754 M891 728 L905 733 M906 733 L907 737" stroke="#2a2aff"/>
<path d="M884 703 L892 701 M882 729 L902 737 M877 737 L900 744 M880 748 L890 744 M860 748 L867 754 M889 760 L897 753 M912 744 L915 752 M904 739 L908 736" stroke="#20f020"/>
<path d="M894 700.5 L899 694.6 M902 706 L908 701.5 M881 718 L886 714 M904 724 L910 720 M902 744.7 L919.7 739.8 M902 744 L903 750 M864.6 754.6 L877.4 751.6 M898 757.5 L906 765.4" stroke="#ff2020"/>
<path d="M893 738 L902 742 M885 744 L891 745" stroke="#ff40ff" stroke-width="2"/>
<path d="M894 712 L894 720 M897 722 L897 728" stroke="#e0e040" stroke-width="1"/>
</g></g>
</svg>

<!--/RVIZ-->
<svg class="a" style="left:356px;top:767px" width="7" height="9"><path d="M6 0.8 L6 8.2 L0.8 4.5 Z" fill="#8a8a8a" stroke="#6a6a6a" stroke-width="1"/></svg><div class="a" style="left:346px;top:768px;width:4px;height:1px;background:#c4c2be;box-shadow:0 3px 0 #c4c2be,0 6px 0 #c4c2be"></div>
<svg class="a" style="left:1414px;top:767px" width="7" height="9"><path d="M0.8 0.8 L0.8 8.2 L6 4.5 Z" fill="#8a8a8a" stroke="#6a6a6a" stroke-width="1"/></svg>
<!--PHOTOS-->
<svg width="0" height="0" style="position:absolute">
<defs>
<linearGradient id="wallg" x1="0" y1="0" x2="1" y2="0"><stop offset="0" stop-color="#70727f"/><stop offset="1" stop-color="#7a7c8c"/></linearGradient>
<linearGradient id="cabg" x1="0" y1="0" x2="0" y2="1"><stop offset="0" stop-color="#868786"/><stop offset="1" stop-color="#7a7b7a"/></linearGradient>
<symbol id="photo" viewBox="0 0 207 155" preserveAspectRatio="none">
<rect width="207" height="155" fill="url(#wallg)"/>
<rect x="57" y="0" width="11" height="155" fill="#85868f"/>
<polygon points="68,0 100,0 102,155 68,155" fill="#56565c"/>
<polygon points="68,0 72,0 98,33 100,155 72,155" fill="#4c4c52"/>
<polygon points="71,7 77,7 87,28 87,33 80,33 71,17" fill="#2e2e32"/>
<rect x="92" y="48" width="5" height="50" fill="#2c2c30"/>
<rect x="98" y="40" width="4" height="115" fill="#606066"/>
<rect x="100" y="0" width="107" height="55" fill="#3c3c42"/>
<polygon points="100,0 120,0 100,20" fill="#34343a"/>
<rect x="148" y="0" width="27" height="3" fill="#f0f0f8"/>
<rect x="102" y="26" width="19" height="16" fill="#d2cec8"/>
<rect x="104" y="42" width="22" height="13" fill="#8a7048"/>
<rect x="125" y="24" width="19" height="15" fill="#d8dce6"/>
<rect x="127" y="30" width="16" height="4" fill="#3850a0"/>
<rect x="126" y="39" width="19" height="14" fill="#4a6aa0"/>
<rect x="144" y="22" width="16" height="15" fill="#90b060"/>
<rect x="145" y="36" width="15" height="17" fill="#b09060"/>
<rect x="160" y="40" width="6" height="13" fill="#c8c8cc"/>
<rect x="166" y="37" width="13" height="14" fill="#c8a060"/>
<rect x="178" y="16" width="24" height="35" fill="#e0e0ea"/>
<rect x="183" y="18" width="16" height="4" fill="#4a5ab0"/>
<rect x="180" y="33" width="20" height="2" fill="#8a8aa0"/>
<rect x="202" y="36" width="5" height="15" fill="#c8a060"/>
<polygon points="102,55 207,49 207,155 104,155" fill="url(#cabg)"/>
<polygon points="102,55 207,49 207,53 102,59" fill="#8a8b8c"/>
<path d="M140.5 57 L142 155 M181.5 52 L185.5 155" stroke="#3e3f40" stroke-width="1.4"/>
<path d="M104 58 L106 155" stroke="#55565a" stroke-width="2"/>
<rect x="146" y="114" width="4" height="2" fill="#c0c0c0"/>
<rect x="0" y="57" width="26" height="29" fill="#1c1c20"/>
<rect x="4" y="59" width="13" height="22" fill="#2e2e34"/>
<rect x="24" y="82" width="26" height="39" fill="#c8c8d2"/>
<path d="M16.4 86 L16.4 155" stroke="#3a3a40" stroke-width="1"/>
</symbol>
<symbol id="loopph" viewBox="134 303 113 85" preserveAspectRatio="none">
<rect x="134" y="303" width="113" height="85" fill="#8c8c8e"/>
<rect x="134" y="303" width="4" height="85" fill="#7c7c84"/>
<rect x="138" y="303" width="12" height="85" fill="#9c9ca4"/>
<rect x="150" y="303" width="22" height="85" fill="#3c3c3e"/>
<rect x="170" y="340" width="4" height="48" fill="#6a6a6c"/>
<rect x="174" y="303" width="73" height="85" fill="#8a8a8c"/>
<rect x="150" y="303" width="97" height="9" fill="#484848"/>
<rect x="197" y="303" width="50" height="4" fill="#f4f4f4"/>
<path d="M193 345 L194 388 M214 340 L216 388 M237 335 L239 388" stroke="#303032" stroke-width="1"/>
<g opacity="0.8">
<circle cx="155" cy="315.5" r="10" fill="#38f828"/>
<circle cx="160.5" cy="316.5" r="9" fill="#38f828"/>
<circle cx="183.5" cy="336.8" r="11" fill="#3030d8"/>
<circle cx="170.6" cy="327.5" r="9" fill="#38f828"/>
<circle cx="178" cy="325.7" r="8" fill="#38f828"/>
<circle cx="185.4" cy="321" r="11" fill="#38f828"/>
<circle cx="192.8" cy="325.7" r="9" fill="#38f828"/>
<circle cx="200" cy="321" r="10" fill="#38f828"/>
<circle cx="217.7" cy="319" r="12" fill="#c8c030"/>
<circle cx="205.7" cy="325.7" r="9" fill="#38f828"/>
<circle cx="215" cy="328.5" r="10" fill="#38f828"/>
<circle cx="211" cy="341.4" r="10" fill="#38f828"/>
<circle cx="218.6" cy="342.3" r="7.4" fill="#60f030"/>
<circle cx="239" cy="324.8" r="8" fill="#2828f0"/>
<circle cx="236" cy="319" r="5" fill="#a0f030"/>
<circle cx="154.5" cy="327.5" r="8.3" fill="#d0c020"/>
<circle cx="198.3" cy="305.4" r="2.5" fill="#2020f0"/><circle cx="211.2" cy="306.8" r="2.5" fill="#2020f0"/><circle cx="216.8" cy="306.8" r="2.5" fill="#2020f0"/><circle cx="231.5" cy="305.8" r="2.5" fill="#2020f0"/><circle cx="239" cy="307.2" r="2.5" fill="#2020f0"/>
<circle cx="173.4" cy="355.2" r="5.5" fill="#3030d8"/>
<circle cx="166" cy="354.3" r="4" fill="#d0c020"/>
<circle cx="170" cy="362" r="3" fill="#38f828"/>
<circle cx="154" cy="374.6" r="6" fill="#2020e0"/>
<circle cx="169.7" cy="374.6" r="8" fill="#38f828"/>
<circle cx="197.4" cy="367.2" r="2.8" fill="#38f828"/>
<circle cx="215.8" cy="366.8" r="3.2" fill="#60f030"/>
<circle cx="138.8" cy="370.5" r="2.3" fill="#2020f0"/>
</g>
</symbol>
</defs></svg>
<svg class="a" style="left:87px;top:93px" width="207" height="155"><use href="#photo"/></svg>
<svg class="a" style="left:134px;top:303px" width="113" height="85"><use href="#loopph"/></svg>
<svg class="a" style="left:108px;top:892px" width="136" height="101" viewBox="0 0 207 155" preserveAspectRatio="none"><rect width="207" height="155" fill="#6a6c7a"/><use href="#photo" width="207" height="155" transform="translate(8.3 0) scale(1.06 1)"/></svg>
<!--/PHOTOS-->
<!-- bottom bar -->
<div class="btn" style="left:9.5px;top:997px;width:49px;height:26px;font-size:14.5px;line-height:22px">Reset</div>
<div class="t" style="left:66.4px;top:1000.5px;font-size:14.7px"><b>Left-Click:</b> Rotate. <b>Middle-Click:</b> Move X/Y. <b>Right-Click/Mouse Wheel:</b>: Zoom. <b>Shift</b>: More options.</div>
<div class="t" style="left:1358px;top:997.5px;font-size:14.7px">30 fps</div>
</body></html>
